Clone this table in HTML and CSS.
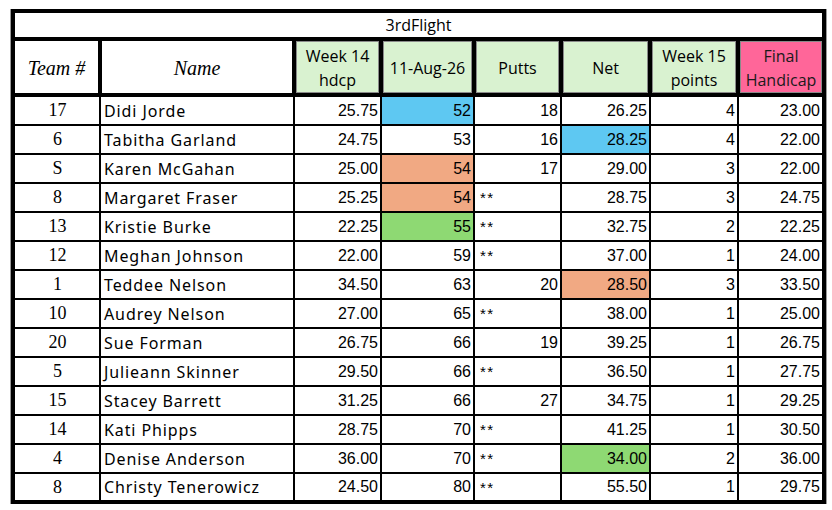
FILE: index.html
```html
<!DOCTYPE html>
<html>
<head>
<meta charset="utf-8">
<link rel="stylesheet" href="styles.css">
</head>
<body>
<div class="sheet">
<table class="flight">
  <colgroup>
    <col class="w-team"><col class="w-name"><col class="w-hdcp"><col class="w-date">
    <col class="w-putts"><col class="w-net"><col class="w-pts"><col class="w-final">
  </colgroup>
  <thead>
    <tr class="title-row"><th colspan="8" class="title">3rdFlight</th></tr>
    <tr class="head-row">
      <th class="h-script">Team #</th>
      <th class="h-script">Name</th>
      <th class="h-green">Week 14<br>hdcp</th>
      <th class="h-green">11-Aug-26</th>
      <th class="h-green">Putts</th>
      <th class="h-green">Net</th>
      <th class="h-green">Week 15<br>points</th>
      <th class="h-pink">Final<br>Handicap</th>
    </tr>
  </thead>
  <tbody>
    <tr class="first"><td class="team">17</td><td class="name">Didi Jorde</td><td class="num">25.75</td><td class="num c-blue">52</td><td class="num">18</td><td class="num">26.25</td><td class="num">4</td><td class="num">23.00</td></tr>
    <tr><td class="team">6</td><td class="name">Tabitha Garland</td><td class="num">24.75</td><td class="num">53</td><td class="num">16</td><td class="num c-blue">28.25</td><td class="num">4</td><td class="num">22.00</td></tr>
    <tr><td class="team">S</td><td class="name">Karen McGahan</td><td class="num">25.00</td><td class="num c-salmon">54</td><td class="num">17</td><td class="num">29.00</td><td class="num">3</td><td class="num">22.00</td></tr>
    <tr><td class="team">8</td><td class="name">Margaret Fraser</td><td class="num">25.25</td><td class="num c-salmon">54</td><td class="stars">**</td><td class="num">28.75</td><td class="num">3</td><td class="num">24.75</td></tr>
    <tr><td class="team">13</td><td class="name">Kristie Burke</td><td class="num">22.25</td><td class="num c-green">55</td><td class="stars">**</td><td class="num">32.75</td><td class="num">2</td><td class="num">22.25</td></tr>
    <tr><td class="team">12</td><td class="name">Meghan Johnson</td><td class="num">22.00</td><td class="num">59</td><td class="stars">**</td><td class="num">37.00</td><td class="num">1</td><td class="num">24.00</td></tr>
    <tr><td class="team">1</td><td class="name">Teddee Nelson</td><td class="num">34.50</td><td class="num">63</td><td class="num">20</td><td class="num c-salmon">28.50</td><td class="num">3</td><td class="num">33.50</td></tr>
    <tr><td class="team">10</td><td class="name">Audrey Nelson</td><td class="num">27.00</td><td class="num">65</td><td class="stars">**</td><td class="num">38.00</td><td class="num">1</td><td class="num">25.00</td></tr>
    <tr><td class="team">20</td><td class="name">Sue Forman</td><td class="num">26.75</td><td class="num">66</td><td class="num">19</td><td class="num">39.25</td><td class="num">1</td><td class="num">26.75</td></tr>
    <tr><td class="team">5</td><td class="name">Julieann Skinner</td><td class="num">29.50</td><td class="num">66</td><td class="stars">**</td><td class="num">36.50</td><td class="num">1</td><td class="num">27.75</td></tr>
    <tr><td class="team">15</td><td class="name">Stacey Barrett</td><td class="num">31.25</td><td class="num">66</td><td class="num">27</td><td class="num">34.75</td><td class="num">1</td><td class="num">29.25</td></tr>
    <tr><td class="team">14</td><td class="name">Kati Phipps</td><td class="num">28.75</td><td class="num">70</td><td class="stars">**</td><td class="num">41.25</td><td class="num">1</td><td class="num">30.50</td></tr>
    <tr><td class="team">4</td><td class="name">Denise Anderson</td><td class="num">36.00</td><td class="num">70</td><td class="stars">**</td><td class="num c-green">34.00</td><td class="num">2</td><td class="num">36.00</td></tr>
    <tr><td class="team">8</td><td class="name">Christy Tenerowicz</td><td class="num">24.50</td><td class="num">80</td><td class="stars">**</td><td class="num">55.50</td><td class="num">1</td><td class="num">29.75</td></tr>
  </tbody>
</table>
</div>
</body>
</html>
```

FILE: styles.css
```css
html, body {
  margin: 0;
  padding: 0;
  background: #ffffff;
}

.sheet {
  padding: 9px 0 0 11px;
}

.flight {
  border-collapse: collapse;
  table-layout: fixed;
  width: 815px;
  border: 4px solid #000;
  box-shadow: -1px 0 0 #9a9a9a, 1px 0 0 #9a9a9a, 0 2px 0 #b0b0b0;
  color: #000;
}

.w-team { width: 87px; }
.w-name { width: 194px; }
.w-hdcp { width: 87px; }
.w-date { width: 93px; }
.w-putts { width: 87px; }
.w-net { width: 89px; }
.w-pts { width: 88px; }
.w-final { width: 86px; }

.flight th {
  padding: 0;
  font-weight: normal;
}

.title-row { height: 28px; }

.title {
  border-bottom: 4px solid #000;
  font-family: "Open Sans", "Noto Sans", sans-serif;
  font-size: 16px;
  text-align: center;
  background: #fff;
}

.head-row { height: 56px; }

.head-row th {
  border: 4px solid #000;
  font-family: "Open Sans", "Noto Sans", sans-serif;
  font-size: 16px;
  line-height: 24px;
  text-align: center;
  padding-top: 1px;
}

.h-script {
  font-family: "Liberation Serif", serif !important;
  font-style: italic;
  font-size: 20px !important;
  background: #fff;
}

.h-green {
  background: #d9f2d0;
  box-shadow: inset 0 0 0 1px #8a8a8a;
}

.h-pink {
  background: #ff6699;
  box-shadow: inset 0 0 0 1px #8a8a8a;
  color: #1a1a1a;
}

.flight tbody tr { height: 29px; }
.flight tbody tr.first { height: 30px; }

.flight td {
  border: 2px solid #000;
  padding: 0 3px 0 4px;
  font-family: "Liberation Sans", Arial, sans-serif;
  font-size: 16px;
  white-space: nowrap;
  overflow: hidden;
}

.flight td.team {
  font-family: "Liberation Serif", serif;
  font-size: 18px;
  text-align: center;
}

.flight td.name {
  font-family: "Noto Sans", sans-serif;
  font-size: 16px;
  letter-spacing: 0.9px;
  text-align: left;
  padding-left: 3px;
}

.flight td.num {
  text-align: right;
  padding-right: 2px;
}

.flight td.stars {
  text-align: left;
  font-size: 15px;
  letter-spacing: 1.5px;
  padding-left: 5px;
}

.c-blue { background: #5ec8f2; }
.c-salmon { background: #f1a983; }
.c-green { background: #8ed973; }
```
